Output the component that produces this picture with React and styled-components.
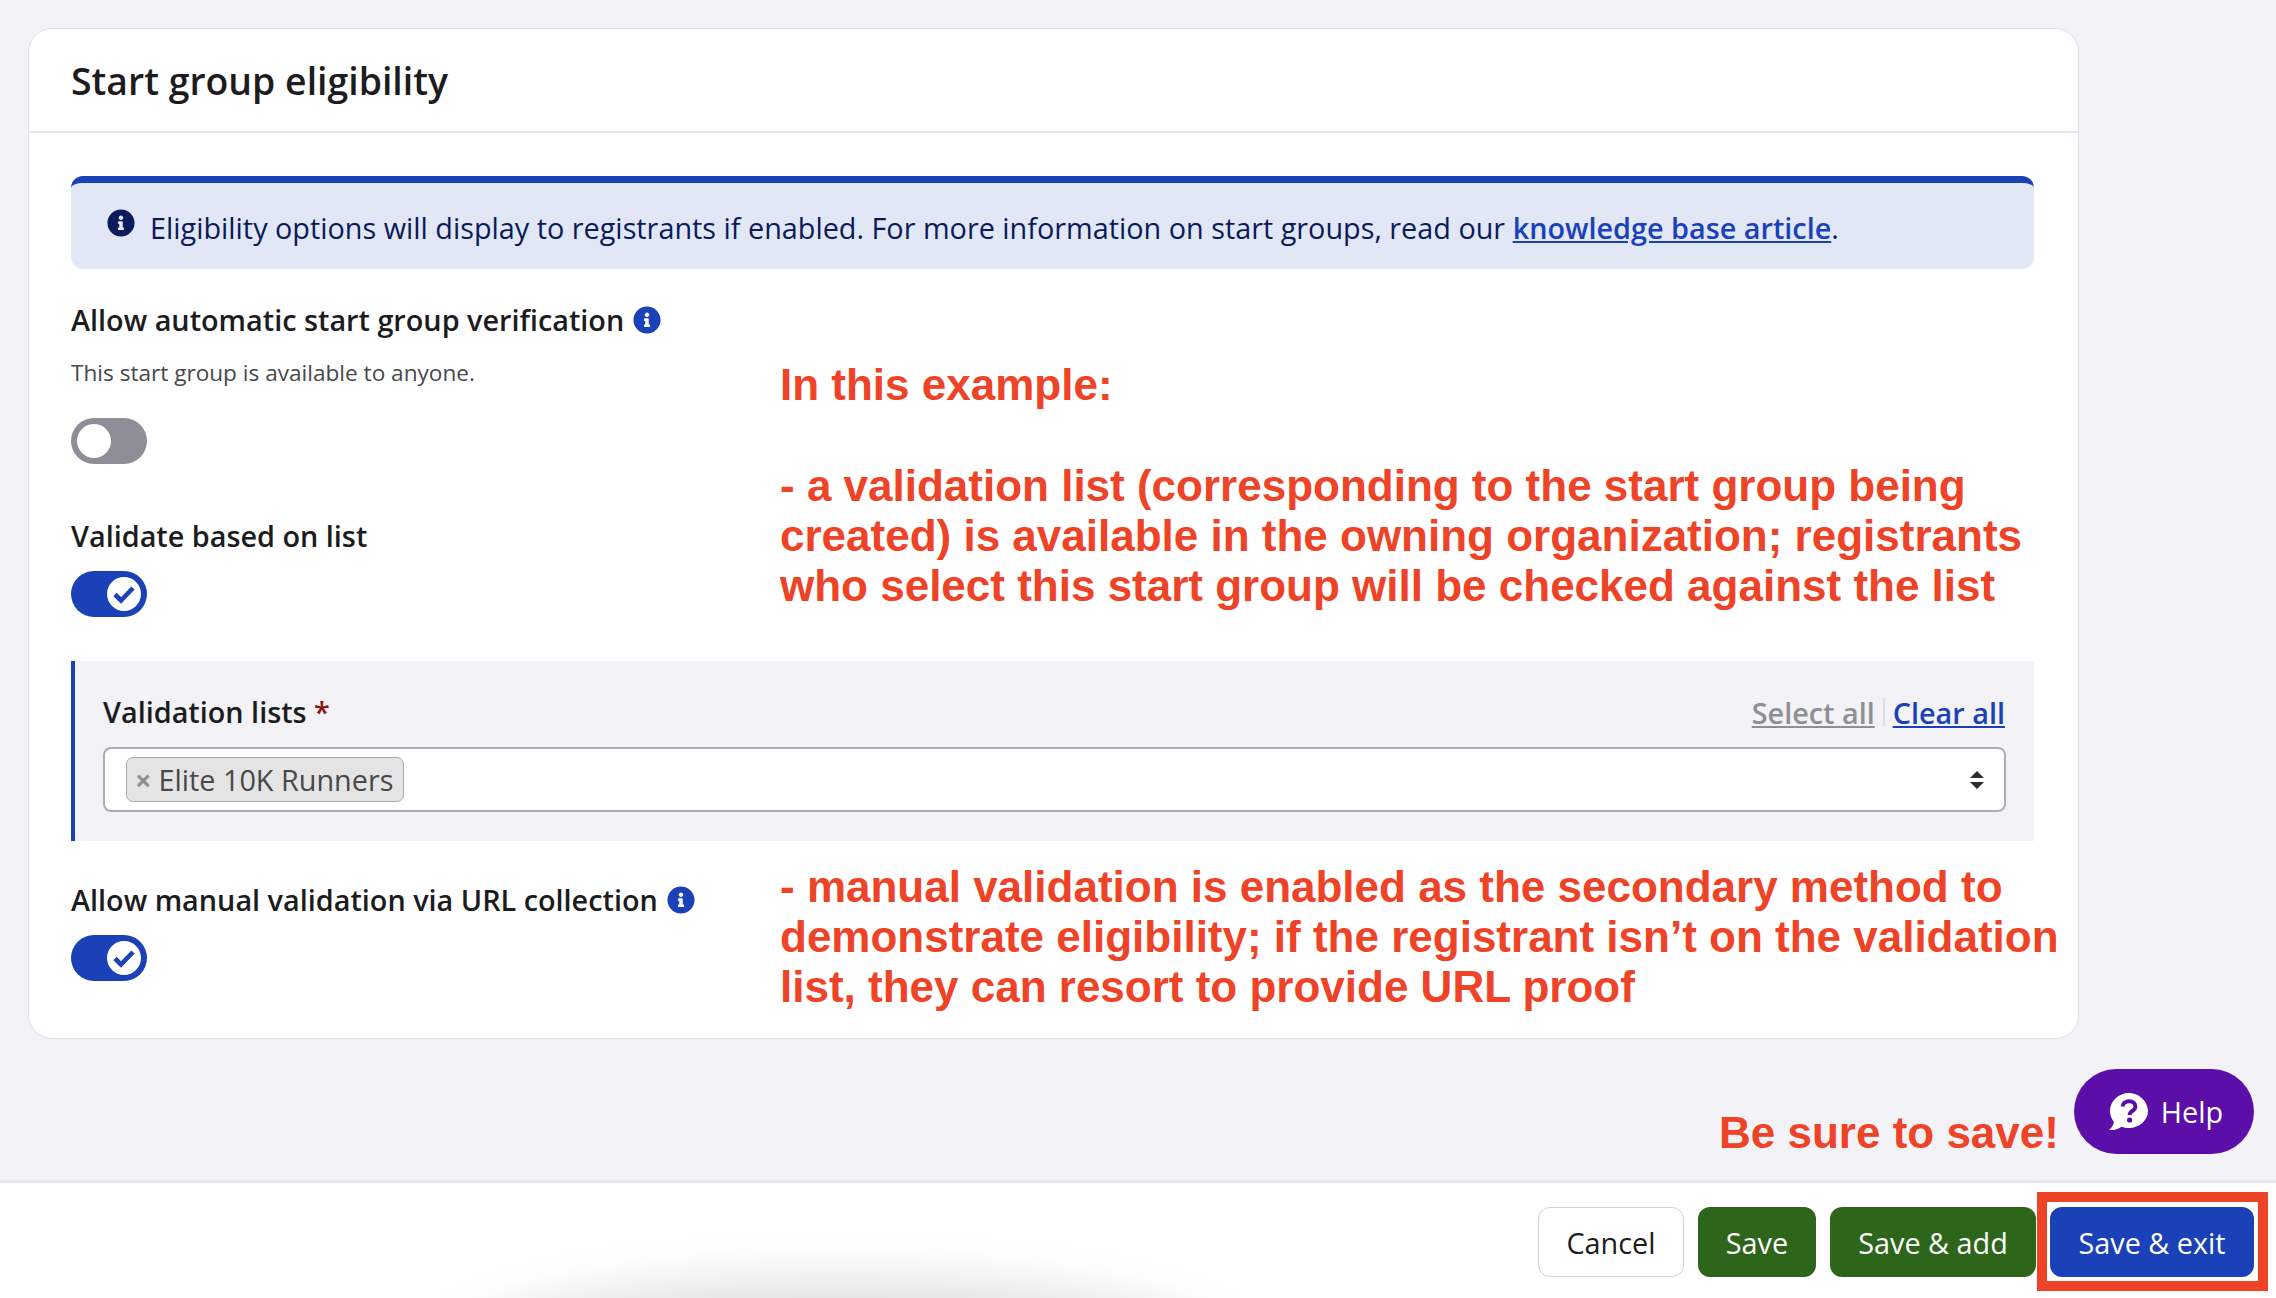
import React from 'react';
import styled, { createGlobalStyle } from 'styled-components';
import { FaInfoCircle } from 'react-icons/fa';

const GlobalStyle = createGlobalStyle`
  html, body {
    margin: 0;
    padding: 0;
    background: #f2f2f7;
    font-family: "Open Sans", "Noto Sans", sans-serif;
    color: #1c1c1e;
  }
  * { box-sizing: border-box; }
`;

const CheckKnob = () => (
    <svg width="34" height="34" viewBox="0 0 34 34" aria-hidden="true">
        <circle cx="17" cy="17" r="17" fill="#fff" />
        <path d="M8 17.5l6 6L26 11" fill="none" stroke="#1a41b8" strokeWidth="4.6" />
    </svg>
);

const HelpIcon = () => (
    <svg width="44" height="40" viewBox="0 0 44 40" aria-hidden="true">
        <path d="M24 1C13.5 1 5 9 5 19c0 4.200 1.500 8 4 11-.6 3-2.500 6-5 8 4.500.5 9-.8 12.500-3.300 2.300.9 4.800 1.300 7.500 1.300 10.500 0 19-8 19-17S34.500 1 24 1z" fill="#fff" />
        <path d="M17.500 14.500c.4-3.300 3.200-5.300 6.500-5.300 3.600 0 6.400 2.100 6.400 5.200 0 4.600-5.800 4.500-5.800 8.600" fill="none" stroke="#5b0fa8" strokeWidth="4" />
        <circle cx="24.600" cy="28" r="2.600" fill="#5b0fa8" />
    </svg>
);

const Toggle = ({ on }) => (
    <ToggleTrack $on={on}>
        {on ? <CheckKnob /> : <OffKnob />}
    </ToggleTrack>
);

export default function App() {
    return (
        <Page>
            <GlobalStyle />
            <Main>
                <Card>
                    <CardHeader>
                        <Title>Start group eligibility</Title>
                    </CardHeader>
                    <CardBody>
                        <Alert>
                            <FaInfoCircle size={28} color="#0b1a5b" />
                            <AlertText>
                                Eligibility options will display to registrants if enabled. For more information on start groups, read our{' '}
                                <AlertLink href="#">knowledge base article</AlertLink>.
                            </AlertText>
                        </Alert>

                        <FieldLabel $top={31}>
                            Allow automatic start group verification
                            <FaInfoCircle size={28} color="#1a41b8" />
                        </FieldLabel>
                        <HelpText>This start group is available to anyone.</HelpText>
                        <ToggleRow $top={30}>
                            <Toggle on={false} />
                        </ToggleRow>

                        <FieldLabel $top={52}>Validate based on list</FieldLabel>
                        <ToggleRow $top={15}>
                            <Toggle on />
                        </ToggleRow>

                        <ListPanel>
                            <ListHead>
                                <PanelLabel>
                                    Validation lists <Required>*</Required>
                                </PanelLabel>
                                <ListActions>
                                    <ActionLink href="#" $muted>Select all</ActionLink>
                                    <ActionDivider />
                                    <ActionLink href="#">Clear all</ActionLink>
                                </ListActions>
                            </ListHead>
                            <SelectBox>
                                <Chip>
                                    <ChipRemove>×</ChipRemove>
                                    Elite 10K Runners
                                </Chip>
                                <svg width="14" height="18" viewBox="0 0 14 18" aria-hidden="true">
                                    <path d="M7 0l7 7H0zM0 11h14l-7 7z" fill="#2c2c2e" />
                                </svg>
                            </SelectBox>
                        </ListPanel>

                        <FieldLabel $top={39}>
                            Allow manual validation via URL collection
                            <FaInfoCircle size={28} color="#1a41b8" />
                        </FieldLabel>
                        <ToggleRow $top={15}>
                            <Toggle on />
                        </ToggleRow>
                    </CardBody>
                </Card>
            </Main>

            <Footer>
                <FooterGlow />
                <FooterButton $kind="cancel">Cancel</FooterButton>
                <FooterButton $kind="save" $width={118}>Save</FooterButton>
                <FooterButton $kind="save" $width={206}>Save &amp; add</FooterButton>
                <FooterButton $kind="exit" $width={204}>Save &amp; exit</FooterButton>
                <SaveHighlight />
            </Footer>

            <HelpButton>
                <HelpIcon />
                Help
            </HelpButton>

            <Note $left={780} $top={360}>In this example:</Note>
            <Note $left={780} $top={461}>
                - a validation list (corresponding to the start group being<br />
                created) is available in the owning organization; registrants<br />
                who select this start group will be checked against the list
            </Note>
            <Note $left={780} $top={862}>
                - manual validation is enabled as the secondary method to<br />
                demonstrate eligibility; if the registrant isn’t on the validation<br />
                list, they can resort to provide URL proof
            </Note>
            <Note $left={1719} $top={1108}>Be sure to save!</Note>
        </Page>
    );
}

const Page = styled.div`
  position: relative;
  height: 1298px;
  overflow: hidden;
  display: flex;
  flex-direction: column;
`;

const Main = styled.main`
  flex: 1;
  padding: 28px 197px 0 28px;
`;

const Card = styled.section`
  background: #ffffff;
  border: 1px solid #e0e0e8;
  border-radius: 24px;
`;

const CardHeader = styled.header`
  height: 104px;
  padding: 0 42px;
  display: flex;
  align-items: center;
  border-bottom: 2px solid #e6e6ee;
`;

const Title = styled.h1`
  margin: 0;
  font-size: 37.4px;
  font-weight: 600;
  color: #1c1c1e;
`;

const CardBody = styled.div`
  padding: 43px 44px 57px 42px;
`;

const Alert = styled.div`
  height: 93px;
  padding: 26px 36px 0;
  display: flex;
  align-items: flex-start;
  gap: 15px;
  background: #e1e7f5;
  border-top: 7px solid #1a41b8;
  border-radius: 12px;
  svg { flex: none; }
`;

const AlertText = styled.div`
  font-size: 28.8px;
  line-height: 38px;
  color: #0b1a5b;
  white-space: nowrap;
`;

const AlertLink = styled.a`
  color: #1a41b8;
  font-weight: 600;
`;

const FieldLabel = styled.div`
  margin-top: ${(p) => p.$top}px;
  height: 40px;
  padding-bottom: 2px;
  display: flex;
  align-items: center;
  gap: 9px;
  font-size: 28.8px;
  font-weight: 600;
  color: #1c1c1e;
  svg { margin-top: 2px; }
`;

const HelpText = styled.div`
  margin-top: 18px;
  font-size: 22.6px;
  line-height: 30px;
  color: #48484a;
`;

const ToggleRow = styled.div`
  margin-top: ${(p) => p.$top}px;
`;

const ToggleTrack = styled.div`
  width: 76px;
  height: 46px;
  padding: 0 6px;
  border-radius: 23px;
  display: flex;
  align-items: center;
  justify-content: ${(p) => (p.$on ? 'flex-end' : 'flex-start')};
  background: ${(p) => (p.$on ? '#1a41b8' : '#8e8e98')};
`;

const OffKnob = styled.span`
  width: 34px;
  height: 34px;
  border-radius: 50%;
  background: #ffffff;
`;

const ListPanel = styled.div`
  margin-top: 44px;
  padding: 31px 28px 29px 28px;
  background: #f2f2f7;
  border-left: 4px solid #1a41b8;
`;

const ListHead = styled.div`
  height: 40px;
  padding-bottom: 2px;
  display: flex;
  align-items: center;
  justify-content: space-between;
`;

const PanelLabel = styled.div`
  font-size: 28.8px;
  font-weight: 600;
  color: #1c1c1e;
`;

const Required = styled.span`
  color: #8e1313;
`;

const ListActions = styled.div`
  display: flex;
  align-items: center;
  gap: 8px;
  margin-top: 2px;
  padding-right: 1px;
`;

const ActionLink = styled.a`
  font-size: 28.8px;
  font-weight: 600;
  color: ${(p) => (p.$muted ? '#8e8e93' : '#1a41b8')};
`;

const ActionDivider = styled.span`
  width: 2px;
  height: 28px;
  background: #dcdce4;
`;

const SelectBox = styled.div`
  margin-top: 15px;
  height: 65px;
  padding: 0 20px 0 21px;
  display: flex;
  align-items: center;
  justify-content: space-between;
  background: #ffffff;
  border: 2px solid #aeaeb2;
  border-radius: 8px;
`;

const Chip = styled.div`
  height: 45px;
  padding: 0 10px 0 8px;
  display: flex;
  align-items: center;
  gap: 7px;
  font-size: 28.8px;
  color: #48484a;
  background: #e4e4e4;
  border: 1px solid #aaaaaa;
  border-radius: 7px;
`;

const ChipRemove = styled.span`
  font-weight: 700;
  color: #8e8e93;
`;

const Footer = styled.footer`
  position: relative;
  height: 118px;
  padding: 24px 22px 0 0;
  display: flex;
  justify-content: flex-end;
  align-items: flex-start;
  gap: 14px;
  background: #ffffff;
  border-top: 3px solid #e8e8f0;
`;

const FooterGlow = styled.div`
  position: absolute;
  left: 500px;
  top: 160px;
  width: 680px;
  height: 60px;
  border-radius: 50%;
  box-shadow: 0 -10px 55px 50px rgba(0, 0, 0, 0.14);
`;

const FooterButton = styled.button`
  width: ${(p) => (p.$width ? `${p.$width}px` : '146px')};
  height: 70px;
  padding: 0;
  font-family: inherit;
  font-size: 28.8px;
  border-radius: 12px;
  border: ${(p) => (p.$kind === 'cancel' ? '1px solid #d1d1d6' : 'none')};
  color: ${(p) => (p.$kind === 'cancel' ? '#1c1c1e' : '#ffffff')};
  background: ${(p) =>
    p.$kind === 'cancel' ? '#ffffff' : p.$kind === 'save' ? '#2d661b' : '#1a41b8'};
`;

const SaveHighlight = styled.div`
  position: absolute;
  left: 2037px;
  top: 9px;
  width: 231px;
  height: 99px;
  border: 10px solid #ee4327;
`;

const HelpButton = styled.div`
  position: absolute;
  left: 2074px;
  top: 1069px;
  width: 180px;
  height: 85px;
  border-radius: 43px;
  display: flex;
  align-items: center;
  justify-content: center;
  gap: 12px;
  font-size: 28.8px;
  color: #ffffff;
  background: #5b0fa8;
`;

const Note = styled.div`
  position: absolute;
  left: ${(p) => p.$left}px;
  top: ${(p) => p.$top}px;
  font-family: "Liberation Sans", Arial, sans-serif;
  font-size: 44px;
  font-weight: 700;
  line-height: 50px;
  color: #ee4327;
  white-space: nowrap;
`;
